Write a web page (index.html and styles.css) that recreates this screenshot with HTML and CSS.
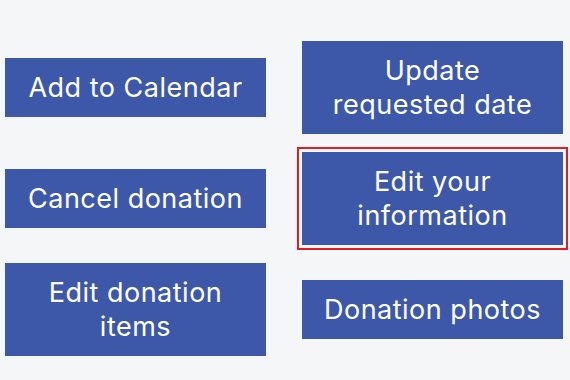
FILE: index.html
```html
<!DOCTYPE html>
<html lang="en">
<head>
<meta charset="utf-8">
<title>Donation actions</title>
<link rel="stylesheet" href="styles.css">
</head>
<body>
<div class="actions">
  <button class="action">Add to Calendar</button>
  <button class="action">Update<br>requested date</button>
  <button class="action">Cancel donation</button>
  <button class="action action--focused">Edit your<br>information</button>
  <button class="action">Edit donation<br>items</button>
  <button class="action">Donation photos</button>
</div>
</body>
</html>
```
FILE: styles.css
```css
html, body {
  margin: 0;
  background: #f5f6f8;
}
body {
  font-family: Inter, "Noto Sans", sans-serif;
}
.actions {
  display: grid;
  grid-template-columns: 261px 261px;
  column-gap: 36px;
  row-gap: 18px;
  align-items: center;
  padding: 41px 0 0 5px;
}
.action {
  display: block;
  width: 261px;
  margin: 0;
  border: 0;
  padding: 12.5px 4px;
  background: #3d58a9;
  color: #ffffff;
  font-family: inherit;
  font-size: 27px;
  line-height: 34px;
  letter-spacing: 0.5px;
  font-weight: 400;
  text-align: center;
  cursor: pointer;
}
.action--focused {
  outline: 2px solid #e31b23;
  outline-offset: 3px;
}
```
